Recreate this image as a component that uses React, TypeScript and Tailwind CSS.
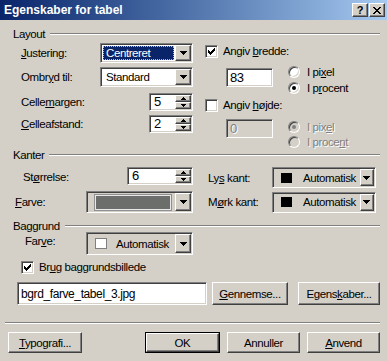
import * as React from "react"

const sunken =
    "border border-t-[#808080] border-l-[#808080] border-b-white border-r-white shadow-[inset_1px_1px_0_#404040,inset_-1px_-1px_0_#d4d0c8]"
const raised =
    "border border-t-white border-l-white border-b-[#404040] border-r-[#404040] shadow-[inset_-1px_-1px_0_#808080]"
const disabledText = "text-[#808080] [text-shadow:1px_1px_0_#ffffff]"

function DownArrow() {
    return (
        <svg width="7" height="4" viewBox="0 0 7 4" shapeRendering="crispEdges">
            <path d="M0 0h7v1h-1v1h-1v1h-1v1h-1v-1h-1v-1h-1v-1h-1z" fill="#000" />
        </svg>
    )
}

function DropButton() {
    return (
        <div className={`w-[16px] h-full flex items-center justify-center bg-[#d4d0c8] ${raised}`}>
            <DownArrow />
        </div>
    )
}

function Select({ value, highlighted, className }: { value: string; highlighted?: boolean; className?: string }) {
    return (
        <div className={`flex bg-white p-[1px] ${sunken} ${className ?? ""}`}>
            <div className="flex-1 flex items-center p-[1px]">
                {highlighted ? (
                    <span className="w-full h-full flex items-center pl-[2px] bg-[#0a246a] text-white border border-dotted border-[#b0b8d0]">
                        {value}
                    </span>
                ) : (
                    <span className="pl-[3px]">{value}</span>
                )}
            </div>
            <DropButton />
        </div>
    )
}

function ColorSelect({ children, className }: { children: React.ReactNode; className?: string }) {
    return (
        <div className={`flex bg-[#d4d0c8] p-[1px] ${sunken} ${className ?? ""}`}>
            <div className="flex-1 flex items-center pl-[7px] pr-[4px]">{children}</div>
            <DropButton />
        </div>
    )
}

function SpinArrow({ up }: { up?: boolean }) {
    return (
        <div className={`flex-1 flex items-center justify-center bg-[#d4d0c8] ${raised}`}>
            <svg width="5" height="3" viewBox="0 0 5 3" shapeRendering="crispEdges">
                <path d={up ? "M2 0h1v1h1v1h1v1h-5v-1h1v-1h1z" : "M0 0h5v1h-1v1h-1v1h-1v-1h-1v-1h-1z"} fill="#000" />
            </svg>
        </div>
    )
}

function Spin({ value, className }: { value: string; className?: string }) {
    return (
        <div className={`flex bg-white p-[1px] ${sunken} ${className ?? ""}`}>
            <div className="flex-1 flex items-center pl-[3px] text-[13px]">{value}</div>
            <div className="w-[16px] flex flex-col">
                <SpinArrow up />
                <SpinArrow />
            </div>
        </div>
    )
}

function Check({ checked }: { checked?: boolean }) {
    return (
        <div className={`w-[13px] h-[13px] shrink-0 bg-white flex items-center justify-center ${sunken}`}>
            {checked && (
                <svg width="7" height="7" viewBox="0 0 7 7" shapeRendering="crispEdges">
                    <path
                        d="M6 0h1v3h-1v1h-1v1h-1v1h-1v1h-1v-1h-1v-1h-1v-3h1v1h1v1h1v-1h1v-1h1z"
                        fill="#000"
                    />
                </svg>
            )}
        </div>
    )
}

function Radio({ checked, disabled }: { checked?: boolean; disabled?: boolean }) {
    return (
        <div
            className={`w-[12px] h-[12px] shrink-0 rounded-full flex items-center justify-center border border-t-[#808080] border-l-[#808080] border-r-white border-b-white shadow-[inset_1px_1px_0_#404040,inset_-1px_-1px_0_#d4d0c8] ${
                disabled ? "bg-[#d4d0c8]" : "bg-white"
            }`}
        >
            {checked && <div className={`w-[4px] h-[4px] rounded-full ${disabled ? "bg-[#808080]" : "bg-black"}`} />}
        </div>
    )
}

function GroupHead({ title }: { title: string }) {
    return (
        <div className="flex items-center h-[12px] leading-[12px]">
            <span>{title}</span>
            <div className="flex-1 ml-[5px] border-t border-t-[#808080] border-b border-b-white" />
        </div>
    )
}

function Button({ children, className, isDefault }: { children: React.ReactNode; className?: string; isDefault?: boolean }) {
    if (isDefault) {
        return (
            <div className={`border border-black ${className ?? ""}`}>
                <div className={`h-full flex items-center justify-center bg-[#d4d0c8] ${raised}`}>{children}</div>
            </div>
        )
    }
    return (
        <div className={`flex items-center justify-center bg-[#d4d0c8] ${raised} ${className ?? ""}`}>{children}</div>
    )
}

function TitleBar() {
    return (
        <div className="h-[20px] flex items-center bg-linear-to-r from-[#0a246a] to-[#a6caf0] pl-[4px] pr-[2px] tracking-normal">
            <span className="flex-1 text-white font-bold text-[12px]">Egenskaber for tabel</span>
            <div className="flex gap-[1px]">
                <div className={`w-[16px] h-[14px] flex items-center justify-center bg-[#d4d0c8] ${raised}`}>
                    <span className="font-bold text-[11px] leading-[11px]">?</span>
                </div>
                <div className={`w-[16px] h-[14px] flex items-center justify-center bg-[#d4d0c8] ${raised}`}>
                    <svg width="8" height="7" viewBox="0 0 8 7" shapeRendering="crispEdges">
                        <path
                            d="M0 0h2v1h1v1h2v-1h1v-1h2v1h-1v1h-1v1h-1v1h1v1h1v1h1v1h-2v-1h-1v-1h-2v1h-1v1h-2v-1h1v-1h1v-1h1v-1h-1v-1h-1v-1h-1z"
                            fill="#000"
                        />
                    </svg>
                </div>
            </div>
        </div>
    )
}

export default function App() {
    return (
        <div className="w-[387px] h-[361px] overflow-hidden bg-[#d4d0c8] text-black text-[11.5px] leading-[14px] tracking-[-0.4px] font-[family-name:'Liberation_Sans',Arial,sans-serif]">
            <TitleBar />

            <div className="pl-[13px] pr-[7px]">
                {/* Layout */}
                <div className="mt-[8px]">
                    <GroupHead title="Layout" />
                </div>
                <div className="flex mt-[3px]">
                    <div className="w-[180px] shrink-0 flex flex-col pl-[8px]">
                        <div className="h-[20px] flex items-center justify-between">
                            <span><u>J</u>ustering:</span>
                            <Select value="Centreret" highlighted className="w-[93px] h-[20px]" />
                        </div>
                        <div className="h-[20px] mt-[4px] flex items-center justify-between">
                            <span>Ombr<u>y</u>d til:</span>
                            <Select value="Standard" className="w-[93px] h-[20px]" />
                        </div>
                        <div className="h-[18px] mt-[6px] flex items-center justify-between">
                            <span>Celle<u>m</u>argen:</span>
                            <Spin value="5" className="w-[44px] h-[18px]" />
                        </div>
                        <div className="h-[18px] mt-[4px] flex items-center justify-between">
                            <span><u>C</u>elleafstand:</span>
                            <Spin value="2" className="w-[44px] h-[18px]" />
                        </div>
                    </div>

                    <div className="flex-1 flex flex-col pl-[12px]">
                        <div className="h-[16px] flex items-center gap-[5px]">
                            <Check checked />
                            <span>Angiv <u>b</u>redde:</span>
                        </div>
                        <div className="flex mt-[5px]">
                            <div className={`ml-[21px] mt-[4px] w-[47px] h-[19px] bg-white flex items-center pl-[3px] text-[13px] ${sunken}`}>
                                83
                            </div>
                            <div className="ml-[15px] flex flex-col">
                                <div className="h-[16px] flex items-center gap-[7px]">
                                    <Radio />
                                    <span>I pi<u>x</u>el</span>
                                </div>
                                <div className="h-[16px] flex items-center gap-[7px]">
                                    <Radio checked />
                                    <span>I p<u>r</u>ocent</span>
                                </div>
                            </div>
                        </div>
                        <div className="h-[16px] mt-[1px] flex items-center gap-[5px]">
                            <Check />
                            <span>Angiv <u>h</u>øjde:</span>
                        </div>
                        <div className="flex mt-[6px]">
                            <div className={`ml-[21px] w-[47px] h-[19px] bg-[#d4d0c8] flex items-center pl-[3px] text-[13px] ${sunken}`}>
                                <span className={disabledText}>0</span>
                            </div>
                            <div className="ml-[15px] flex flex-col">
                                <div className="h-[15px] flex items-center gap-[7px]">
                                    <Radio checked disabled />
                                    <span className={disabledText}>I pix<u>e</u>l</span>
                                </div>
                                <div className="h-[15px] flex items-center gap-[7px]">
                                    <Radio disabled />
                                    <span className={disabledText}>I proce<u>n</u>t</span>
                                </div>
                            </div>
                        </div>
                    </div>
                </div>

                {/* Kanter */}
                <GroupHead title="Kanter" />
                <div className="flex mt-[6px]">
                    <div className="w-[180px] shrink-0 h-[21px] flex items-start justify-between pl-[10px]">
                        <span className="mt-[3px]">St<u>ø</u>rrelse:</span>
                        <Spin value="6" className="w-[66px] h-[18px]" />
                    </div>
                    <div className="flex-1 flex items-center justify-between pl-[15px] pr-[4px]">
                        <span>Ly<u>s</u> kant:</span>
                        <ColorSelect className="w-[104px] h-[21px]">
                            <div className="w-[11px] h-[10px] shrink-0 bg-black" />
                            <span className="ml-[11px]">Automatisk</span>
                        </ColorSelect>
                    </div>
                </div>
                <div className="flex mt-[3px]">
                    <div className="w-[180px] shrink-0 h-[22px] flex items-center justify-between pl-[2px]">
                        <span><u>F</u>arve:</span>
                        <ColorSelect className="w-[107px] h-[22px]">
                            <div className="flex-1 h-[15px] bg-[#6b6e6a] border border-[#e8e8e8] shadow-[0_0_0_1px_#909090]" />
                        </ColorSelect>
                    </div>
                    <div className="flex-1 flex items-center justify-between pl-[15px] pr-[4px]">
                        <span>M<u>ø</u>rk kant:</span>
                        <ColorSelect className="w-[104px] h-[21px]">
                            <div className="w-[11px] h-[10px] shrink-0 bg-black" />
                            <span className="ml-[11px]">Automatisk</span>
                        </ColorSelect>
                    </div>
                </div>

                {/* Baggrund */}
                <div className="mt-[7px]">
                    <GroupHead title="Baggrund" />
                </div>
                <div className="w-[180px] h-[23px] flex items-start justify-between pl-[12px]">
                    <span className="mt-[2px]">Far<u>v</u>e:</span>
                    <ColorSelect className="w-[107px] h-[23px]">
                        <div className="w-[12px] h-[11px] shrink-0 bg-white border border-[#808080]" />
                        <span className="ml-[9px]">Automatisk</span>
                    </ColorSelect>
                </div>
                <div className="h-[16px] mt-[4px] pl-[8px] flex items-center gap-[5px]">
                    <Check checked />
                    <span>Br<u>u</u>g baggrundsbillede</span>
                </div>
                <div className="flex h-[23px] mt-[7px]">
                    <div className={`ml-[4px] w-[190px] bg-white flex items-center pl-[3px] text-[12px] ${sunken}`}>
                        bgrd_farve_tabel_3.jpg
                    </div>
                    <Button className="ml-[5px] w-[76px]">
                        <span><u>G</u>ennemse...</span>
                    </Button>
                    <Button className="ml-[10px] w-[82px]">
                        <span>Egens<u>k</u>aber...</span>
                    </Button>
                </div>
            </div>

            <div className="pl-[5px] pr-[7px]">
                <div className="mt-[17px] border-t border-t-[#808080] border-b border-b-white" />
                <div className="flex h-[21px] mt-[8px] pl-[3px]">
                    <Button className="w-[74px]">
                        <span><u>T</u>ypografi...</span>
                    </Button>
                    <Button isDefault className="ml-[63px] w-[75px]">
                        <span>OK</span>
                    </Button>
                    <Button className="ml-[7px] w-[73px]">
                        <span>Annuller</span>
                    </Button>
                    <Button className="ml-[7px] w-[73px]">
                        <span><u>A</u>nvend</span>
                    </Button>
                </div>
            </div>
        </div>
    )
}
